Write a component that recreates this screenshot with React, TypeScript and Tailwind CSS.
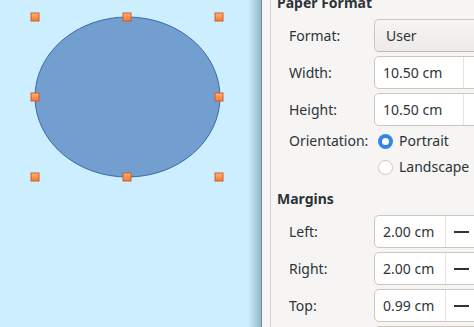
import React from "react";

const handles: [number, number][] = [
  [35, 17], [127, 17], [219, 17],
  [35, 97], [219, 97],
  [35, 177], [127, 177], [219, 177],
];

function Canvas() {
  return (
    <div className="flex h-full shrink-0 bg-[#cdeeff]">
      <div className="w-[248px] h-full">
        <svg width="248" height="327" viewBox="0 0 248 327">
          <defs>
            <linearGradient id="hg" x1="0" y1="0" x2="0" y2="1">
              <stop offset="0" stopColor="#ffb47a" />
              <stop offset="1" stopColor="#f57a2e" />
            </linearGradient>
          </defs>
          <ellipse cx="127.5" cy="97" rx="92.5" ry="80" fill="#729fcf" stroke="#3a6aa6" strokeWidth="1" />
          {handles.map(([x, y], i) => (
            <rect key={i} x={x - 4} y={y - 4} width="8" height="8" fill="url(#hg)" stroke="#d5592a" strokeWidth="1" />
          ))}
        </svg>
      </div>
      <div className="w-[13px] h-full bg-gradient-to-r from-[#cdeeff] to-[#94b8c8]" />
      <div className="w-[1px] h-full bg-[#6f8d9c]" />
    </div>
  );
}

function Label({ children }: { children?: React.ReactNode }) {
  return <div className="flex items-center pl-[18px] text-[#2e3436]">{children}</div>;
}

function Entry({ value, textW, minus }: { value: string; textW: number; minus?: boolean }) {
  return (
    <div className="flex h-[33px] w-[180px] rounded-[5px] border border-[#cdc7c2] bg-white">
      <div className="flex items-center pl-[8px] text-[#2e3436]" style={{ width: textW }}>
        {value}
      </div>
      <div className="w-[1px] h-full bg-[#e6e3e0]" />
      <div className="flex items-center pl-[8px] w-[34px]">
        {minus && <div className="w-[15px] h-[2px] bg-[#2e3436]" />}
      </div>
    </div>
  );
}

function Radio({ checked, label }: { checked?: boolean; label: string }) {
  return (
    <div className="flex items-center h-[22px] pl-[4px] gap-[6px] text-[#2e3436]">
      {checked ? (
        <div className="w-[15px] h-[15px] rounded-full bg-[#3584e4] flex items-center justify-center">
          <div className="w-[7px] h-[7px] rounded-full bg-white" />
        </div>
      ) : (
        <div className="w-[15px] h-[15px] rounded-full border border-[#cdc7c2] bg-white" />
      )}
      <span>{label}</span>
    </div>
  );
}

export default function App() {
  return (
    <div
      className="w-[474px] h-[327px] overflow-hidden flex text-[14px]"
      style={{ fontFamily: '"Noto Sans", "Open Sans", sans-serif' }}
    >
      <Canvas />
      <div className="flex h-full w-[300px] shrink-0 bg-[#f6f5f4]">
        <div className="w-[8px] h-full" />
        <div className="w-[1px] h-full bg-[#d3cfcb]" />
        <div className="flex flex-col -mt-[7px] leading-[20px]">
          <div className="pl-[6px] font-bold text-[#2e3436]">Paper Format</div>
          <div className="grid grid-cols-[103px_auto] gap-y-[4px] mt-[6px]">
            <Label>Format:</Label>
            <div className="flex items-center h-[33px] w-[180px] rounded-[5px] border border-[#cdc7c2] border-b-[#bfb8b1] bg-gradient-to-b from-[#f6f5f4] to-[#edebe9] pl-[11px] text-[#2e3436]">
              User
            </div>
            <Label>Width:</Label>
            <Entry value="10.50 cm" textW={88} />
            <Label>Height:</Label>
            <Entry value="10.50 cm" textW={88} />
            <Label>Orientation:</Label>
            <Radio checked label="Portrait" />
            <div />
            <Radio label="Landscape" />
          </div>
          <div className="pl-[6px] mt-[11px] font-bold text-[#2e3436]">Margins</div>
          <div className="grid grid-cols-[103px_auto] gap-y-[4px] mt-[6px]">
            <Label>Left:</Label>
            <Entry value="2.00 cm" textW={70} minus />
            <Label>Right:</Label>
            <Entry value="2.00 cm" textW={70} minus />
            <Label>Top:</Label>
            <Entry value="0.99 cm" textW={70} minus />
            <Label />
            <Entry value="" textW={70} minus />
          </div>
        </div>
      </div>
    </div>
  );
}
